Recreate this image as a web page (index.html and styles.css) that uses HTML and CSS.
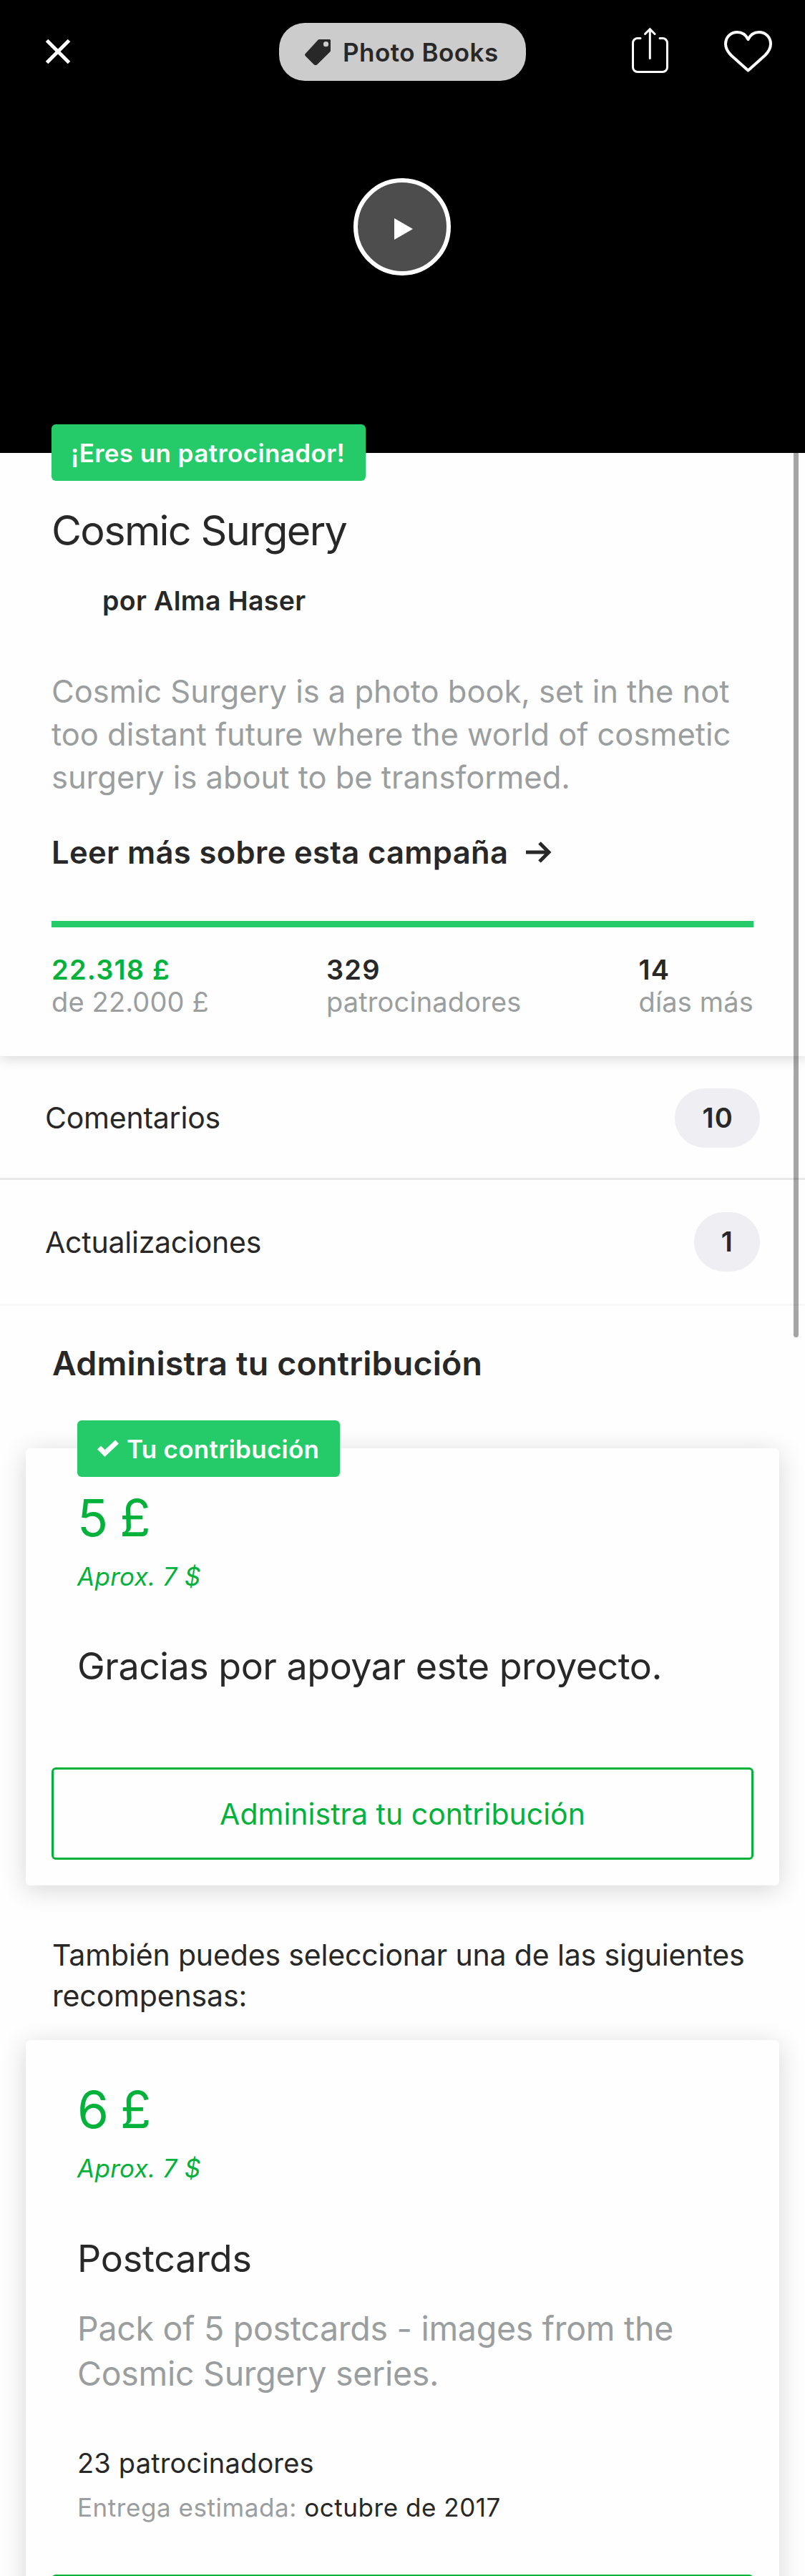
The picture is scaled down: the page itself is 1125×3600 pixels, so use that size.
FILE: index.html
```html
<!DOCTYPE html>
<html lang="es">
<head>
  <meta charset="utf-8">
  <title>Cosmic Surgery</title>
  <link rel="stylesheet" href="styles.css">
</head>
<body>
  <div class="page">
    <header class="hero">
      <nav class="toolbar">
        <button class="icon-button" aria-label="Cerrar">
          <svg class="icon-close" viewBox="0 0 36 36"><path d="M2.500 2.500l31 31M33.500 2.500l-31 31"/></svg>
        </button>
        <a class="category">
          <svg class="icon-tag" viewBox="0 0 36 36"><path fill-rule="evenodd" d="M20 0H34.500Q36 0 36 1.500V15.500Q36 16.600 35.200 17.400L17.200 35.200Q15 37 12.800 35.200L.8 23.200Q-.8 21.500 .8 20L18.500 .7Q19.200 0 20 0ZM29.500 3.100a3.600 3.600 0 1 0 0 7.200a3.600 3.600 0 1 0 0-7.200Z"/></svg>
          <span>Photo Books</span>
        </a>
        <div class="actions">
          <button class="icon-button" aria-label="Compartir">
            <svg class="icon-share" viewBox="0 0 51 64"><path d="M12 14.500H8a6.500 6.500 0 0 0-6.500 6.500V55A6.500 6.500 0 0 0 8 61.500H43A6.500 6.500 0 0 0 49.500 55V21A6.500 6.500 0 0 0 43 14.500H39M25.300 42.500V2M18.500 8.500L25.300 1.700L32.100 8.500"/></svg>
          </button>
          <button class="icon-button" aria-label="Guardar">
            <svg class="icon-heart" viewBox="0 0 67 58"><path d="M33.500 12C30 5 25 2 18.500 2C9 2 2 9 2 18.500C2 25 5 29.500 10 34.500L33.500 55.500L57 34.500C62 29.500 65 25 65 18.500C65 9 58 2 48.500 2C42 2 37 5 33.500 12Z"/></svg>
          </button>
        </div>
      </nav>
      <button class="play" aria-label="Reproducir">
        <svg class="icon-play" viewBox="0 0 26 30"><path d="M0 0L26 15L0 30Z"/></svg>
      </button>
    </header>

    <main>
      <section class="project">
        <span class="badge badge-backer">¡Eres un patrocinador!</span>
        <h1 class="project-title">Cosmic Surgery</h1>
        <p class="project-author">por Alma Haser</p>
        <p class="project-blurb">Cosmic Surgery is a photo book, set in the not too distant future where the world of cosmetic surgery is about to be transformed.</p>
        <a class="read-more">
          <span>Leer más sobre esta campaña</span>
          <svg class="icon-arrow" viewBox="0 0 34 30"><path d="M0 15H31M19 2L32 15L19 28"/></svg>
        </a>
        <div class="progress"></div>
        <dl class="stats">
          <div class="stat stat-pledged"><dt>22.318 £</dt><dd>de 22.000 £</dd></div>
          <div class="stat stat-backers"><dt>329</dt><dd>patrocinadores</dd></div>
          <div class="stat stat-days"><dt>14</dt><dd>días más</dd></div>
        </dl>
      </section>

      <ul class="links">
        <li class="link"><span>Comentarios</span><span class="count">10</span></li>
        <li class="link link-last"><span>Actualizaciones</span><span class="count">1</span></li>
      </ul>

      <h2 class="section-title">Administra tu contribución</h2>

      <article class="reward">
        <span class="badge badge-pledge">
          <svg class="icon-check" viewBox="0 0 30 23"><path d="M2.500 11L10.500 19L27.500 3"/></svg>
          <span>Tu contribución</span>
        </span>
        <div class="reward-body">
          <p class="price">5 £</p>
          <p class="approx">Aprox. 7 $</p>
          <h3 class="reward-title reward-thanks">Gracias por apoyar este proyecto.</h3>
        </div>
        <button class="outline-button">Administra tu contribución</button>
      </article>

      <p class="hint">También puedes seleccionar una de las siguientes recompensas:</p>

      <article class="reward reward-option">
        <div class="reward-body">
          <p class="price">6 £</p>
          <p class="approx">Aprox. 7 $</p>
          <h3 class="reward-title">Postcards</h3>
          <p class="reward-text">Pack of 5 postcards - images from the Cosmic Surgery series.</p>
          <p class="reward-backers">23 patrocinadores</p>
          <p class="delivery">Entrega estimada: <span class="delivery-date">octubre de 2017</span></p>
        </div>
        <div class="outline-button"></div>
      </article>
    </main>
    <div class="scroll-thumb"></div>
  </div>
</body>
</html>
```
FILE: styles.css
```css
* {
  box-sizing: border-box;
  margin: 0;
  padding: 0;
}

body {
  background: #fefefe;
  color: #282828;
  font-family: Inter, "Liberation Sans", sans-serif;
}

button {
  background: none;
  border: 0;
  font: inherit;
  color: inherit;
}

ul {
  list-style: none;
}

svg {
  display: block;
  overflow: visible;
  fill: none;
  stroke: currentColor;
}

.page {
  position: relative;
  width: 1125px;
  height: 3600px;
  overflow: hidden;
}

/* Video header */
.hero {
  height: 633px;
  background: #000;
  color: #fff;
}

.toolbar {
  display: grid;
  grid-template-columns: 1fr 345px 1fr;
  align-items: center;
  height: 145px;
  padding: 0 46px 0 46px;
}

.icon-close {
  width: 36px;
  height: 36px;
  margin: -2px 0 0 17px;
  stroke-width: 5;
}

.category {
  display: flex;
  align-items: center;
  gap: 17px;
  height: 81px;
  padding-left: 36px;
  border-radius: 36px;
  background: #ccc;
  color: #282828;
  font-size: 35px;
  font-weight: 600;
  letter-spacing: 0.49px;
  white-space: nowrap;
}

.icon-tag {
  width: 36px;
  height: 36px;
  fill: currentColor;
  stroke: none;
}

.actions {
  display: flex;
  justify-content: flex-end;
  align-items: center;
  gap: 78px;
}

.icon-share {
  width: 51px;
  height: 64px;
  margin-top: -3px;
  stroke-width: 3;
  stroke-linecap: round;
}

.icon-heart {
  width: 67px;
  height: 58px;
  margin-top: -2px;
  stroke-width: 4;
  stroke-linejoin: round;
}

.play {
  display: flex;
  align-items: center;
  justify-content: center;
  width: 136px;
  height: 136px;
  margin: 104px 0 0 494px;
  padding: 5px 0 0 4px;
  border: 6px solid #fff;
  border-radius: 50%;
  background: #4d4d4d;
  color: #fff;
}

.icon-play {
  width: 26px;
  height: 30px;
  fill: currentColor;
  stroke: none;
}

/* Project summary */
.project {
  position: relative;
  height: 843px;
  padding: 73px 72px 0;
  background: #fefefe;
  box-shadow: 0 3px 18px rgba(0, 0, 0, 0.16);
  clip-path: inset(-40px 0 -24px 0);
}

.badge {
  position: absolute;
  display: flex;
  align-items: center;
  height: 79px;
  border-radius: 6px;
  background: #25cb68;
  color: #fff;
  font-size: 35px;
  font-weight: 600;
  white-space: nowrap;
}

.badge-backer {
  top: -40px;
  left: 72px;
  width: 439px;
  padding-left: 27px;
  letter-spacing: 0.4px;
}

.project-title {
  font-size: 57.5px;
  font-weight: 400;
  line-height: 70px;
  letter-spacing: -1.65px;
}

.project-author {
  margin: 39px 0 0 71px;
  font-size: 37.5px;
  font-weight: 600;
  line-height: 50px;
  letter-spacing: 0.36px;
}

.project-blurb {
  margin-top: 71px;
  color: #9b9e9e;
  font-size: 43.5px;
  line-height: 60px;
  letter-spacing: -0.03px;
}

.read-more {
  display: flex;
  align-items: center;
  gap: 25px;
  margin-top: 47px;
  font-size: 43.5px;
  font-weight: 600;
  line-height: 56px;
  letter-spacing: 0.35px;
}

.icon-arrow {
  width: 34px;
  height: 30px;
  stroke-width: 5;
}

.progress {
  height: 9px;
  margin-top: 68px;
  background: #25cb68;
}

.stats {
  display: flex;
  justify-content: space-between;
  margin-top: 37px;
  font-size: 38px;
  line-height: 45px;
  letter-spacing: 0.15px;
}

.stat dt {
  font-weight: 600;
  letter-spacing: 1.2px;
}

.stat dd {
  color: #9b9e9e;
}

.stat-pledged dt {
  color: #03b13b;
}

/* Comments and updates */
.link {
  display: flex;
  align-items: center;
  justify-content: space-between;
  height: 173px;
  padding: 2px 63px 0;
  border-bottom: 3px solid #e8e8e8;
  font-size: 41px;
  letter-spacing: -0.23px;
}

.link-last {
  height: 176px;
  padding-top: 0;
  border-color: #f7f7f7;
}

.count {
  height: 83px;
  padding: 0 37px 0 38px;
  border-radius: 42px;
  background: #eeeef3;
  font-size: 38px;
  font-weight: 600;
  line-height: 83px;
  letter-spacing: 1.2px;
}

.section-title {
  margin: 50px 73px 0;
  font-size: 46.5px;
  font-weight: 600;
  line-height: 60px;
  letter-spacing: 0.17px;
}

/* Reward cards */
.reward {
  position: relative;
  height: 611px;
  margin: 89px 36px 0;
  padding: 57px 36px 0;
  border-radius: 6px;
  background: #fefefe;
  box-shadow: 0 6px 36px rgba(0, 0, 0, 0.16);
}

.reward-option {
  height: 920px;
  margin-top: 33px;
}

.badge-pledge {
  top: -39px;
  left: 72px;
  width: 367px;
  gap: 11px;
  padding-left: 28px;
  letter-spacing: 0.27px;
}

.icon-check {
  width: 30px;
  height: 23px;
  margin-top: -3px;
  stroke-width: 7;
}

.reward-body {
  padding: 0 36px;
}

.price {
  color: #03b13b;
  font-size: 71px;
  line-height: 80px;
  word-spacing: -4px;
}

.approx {
  margin-top: 20px;
  color: #03b13b;
  font-size: 35px;
  font-style: italic;
  line-height: 44px;
  letter-spacing: 0.3px;
}

.reward-title {
  margin-top: 73px;
  font-size: 52px;
  font-weight: 400;
  line-height: 64px;
  letter-spacing: -0.19px;
}

.reward-thanks {
  margin-top: 72px;
  letter-spacing: -0.48px;
}

.outline-button {
  display: block;
  width: 100%;
  height: 129px;
  margin-top: 109px;
  border: 3px solid #03b13b;
  border-radius: 6px;
  color: #03b13b;
  font-size: 41px;
}

.hint {
  margin: 69px 73px 0;
  font-size: 41px;
  line-height: 57px;
  letter-spacing: -0.15px;
}

.reward-text {
  margin-top: 34px;
  color: #9b9e9e;
  font-size: 46.5px;
  line-height: 63px;
  letter-spacing: -0.28px;
}

.reward-backers {
  margin-top: 68px;
  font-size: 38px;
  line-height: 50px;
  letter-spacing: 0.17px;
}

.delivery {
  margin-top: 14px;
  color: #9b9e9e;
  font-size: 35px;
  line-height: 46px;
  letter-spacing: 0.55px;
}

.delivery-date {
  color: #282828;
}

.reward-option .outline-button {
  margin-top: 71px;
}

/* Scroll indicator */
.scroll-thumb {
  position: absolute;
  top: 633px;
  right: 9px;
  width: 7px;
  height: 1236px;
  border-radius: 0 0 4px 4px;
  background: rgba(0, 0, 0, 0.35);
}
```
